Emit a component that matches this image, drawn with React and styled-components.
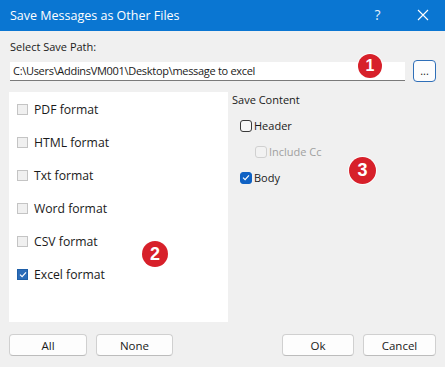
import React from "react";
import styled, { createGlobalStyle } from "styled-components";

const Global = createGlobalStyle`
  html, body { margin: 0; padding: 0; background: #f0f0f0; }
  body { font-family: "Open Sans", "Noto Sans", sans-serif; }
`;

const Window = styled.div`
  position: relative;
  width: 445px;
  height: 367px;
  background: #f0f0f0;
  display: flex;
  flex-direction: column;
  overflow: hidden;
  font-family: "Open Sans", "Noto Sans", sans-serif;
  font-size: 11px;
  color: #1a1a1a;
`;

const TitleBar = styled.div`
  height: 31px;
  background: #0a76d2;
  display: flex;
  align-items: center;
  padding-left: 10px;
  color: #fff;
  font-size: 12.5px;
`;

const Title = styled.div`
  flex: 1;
  margin-top: -1px;
`;

const TitleButton = styled.div`
  width: 45px;
  display: flex;
  justify-content: center;
  align-items: center;
  font-size: 14px;
  color: #e6f0fa;
  margin-top: -2px;
`;

const Body = styled.div`
  flex: 1;
  display: flex;
  flex-direction: column;
  padding: 7px 9px 0 9px;
`;

const Label = styled.div`
  padding-left: 1px;
  height: 18px;
  line-height: 18px;
  font-size: 11px;
`;

const PathRow = styled.div`
  display: flex;
  align-items: center;
  margin-top: 4px;
  height: 22px;
`;

const PathInput = styled.div`
  margin-left: 1px;
  width: 395px;
  height: 19px;
  background: #fff;
  border-bottom: 1px solid #7a7a7a;
  box-sizing: border-box;
  display: flex;
  align-items: center;
  padding-left: 3px;
  white-space: nowrap;
  font-size: 11px;
  letter-spacing: -0.3px;
`;

const BrowseButton = styled.div`
  margin-left: 8px;
  width: 23px;
  height: 22px;
  box-sizing: border-box;
  border: 1px solid #2f6fb8;
  border-radius: 4px;
  background: #fdfdfd;
  display: flex;
  justify-content: center;
  align-items: center;
  font-size: 11px;
  padding-bottom: 2px;
`;

const Main = styled.div`
  display: flex;
  margin-top: 10px;
  height: 230px;
`;

const FormatPanel = styled.div`
  width: 219px;
  background: #fff;
  display: flex;
  flex-direction: column;
  gap: 22px;
  padding: 12px 0 0 8px;
  box-sizing: border-box;
  font-size: 12.2px;
`;

const ContentPanel = styled.div`
  flex: 1;
  padding-left: 4px;
  display: flex;
  flex-direction: column;
  font-size: 11px;
`;

const GroupTitle = styled.div`
  height: 16px;
  line-height: 16px;
`;

const Row = styled.div`
  display: flex;
  align-items: center;
  height: 11px;
  gap: ${(p) => p.$gap || 6}px;
  margin-left: ${(p) => p.$indent || 0}px;
  margin-top: ${(p) => p.$top || 0}px;
  color: ${(p) => (p.$disabled ? "#a0a0a0" : "#1a1a1a")};
`;

const ClassicBox = styled.div`
  width: 11px;
  height: 11px;
  box-sizing: border-box;
  border: 1px solid ${(p) => (p.$checked ? "#1e5fa8" : "#c4c4c4")};
  background: ${(p) => (p.$checked ? "#2c6cb8" : "#f0f0f0")};
  display: flex;
  align-items: center;
  justify-content: center;
`;

const ModernBox = styled.div`
  width: 12px;
  height: 12px;
  box-sizing: border-box;
  border-radius: 3px;
  border: 1px solid
    ${(p) => (p.$checked ? "#0f62c4" : p.$disabled ? "#d0d0d0" : "#3a3a3a")};
  background: ${(p) => (p.$checked ? "#0f62c4" : p.$disabled ? "#f2f2f2" : "#f7f7f7")};
  display: flex;
  align-items: center;
  justify-content: center;
`;

const Footer = styled.div`
  display: flex;
  align-items: center;
  margin-top: 12px;
  gap: 9px;
`;

const Spacer = styled.div`
  flex: 1;
`;

const Button = styled.div`
  width: ${(p) => p.$w}px;
  height: 22px;
  box-sizing: border-box;
  border: 1px solid #d0d0d0;
  border-bottom-color: #bcbcbc;
  border-radius: 4px;
  background: #fdfdfd;
  display: flex;
  align-items: center;
  justify-content: center;
  font-size: 11.5px;
`;

const Badge = styled.div`
  position: absolute;
  left: ${(p) => p.$x}px;
  top: ${(p) => p.$y}px;
  width: ${(p) => p.$size}px;
  height: ${(p) => p.$size}px;
  border-radius: 50%;
  background: #d7202a;
  color: #fff;
  font-family: "Liberation Sans", Arial, sans-serif;
  font-weight: bold;
  font-size: ${(p) => Math.round(p.$size * 0.68)}px;
  display: flex;
  align-items: center;
  justify-content: center;
  box-shadow: 0 0 0 1px rgba(255, 255, 255, 0.8);
`;

const Check = ({ color = "#fff" }) => (
  <svg width="8" height="7" viewBox="0 0 8 7">
    <path d="M1 3.6 L3.1 5.6 L7 1.3" fill="none" stroke={color} strokeWidth="1.2" />
  </svg>
);

const formats = [
  { label: "PDF format" },
  { label: "HTML format" },
  { label: "Txt format" },
  { label: "Word format" },
  { label: "CSV format" },
  { label: "Excel format", checked: true },
];

export default function App() {
  return (
    <>
      <Global />
      <Window>
        <TitleBar>
          <Title>Save Messages as Other Files</Title>
          <TitleButton>?</TitleButton>
          <TitleButton>
            <svg width="12" height="12" viewBox="0 0 12 12">
              <path d="M1 1 L11 11 M11 1 L1 11" stroke="#fff" strokeWidth="1.1" />
            </svg>
          </TitleButton>
        </TitleBar>
        <Body>
          <Label>Select Save Path:</Label>
          <PathRow>
            <PathInput>C:\Users\AddinsVM001\Desktop\message to excel</PathInput>
            <BrowseButton>...</BrowseButton>
          </PathRow>
          <Main>
            <FormatPanel>
              {formats.map((f) => (
                <Row key={f.label} $gap={6}>
                  <ClassicBox $checked={f.checked}>{f.checked && <Check />}</ClassicBox>
                  <span>{f.label}</span>
                </Row>
              ))}
            </FormatPanel>
            <ContentPanel>
              <GroupTitle>Save Content</GroupTitle>
              <Row $gap={2} $indent={8} $top={12}>
                <ModernBox />
                <span>Header</span>
              </Row>
              <Row $gap={2} $indent={23} $top={15} $disabled>
                <ModernBox $disabled />
                <span>Include Cc</span>
              </Row>
              <Row $gap={2} $indent={8} $top={15}>
                <ModernBox $checked>
                  <Check />
                </ModernBox>
                <span>Body</span>
              </Row>
            </ContentPanel>
          </Main>
          <Footer>
            <Button $w={78}>All</Button>
            <Button $w={77}>None</Button>
            <Spacer />
            <Button $w={72}>Ok</Button>
            <Button $w={73}>Cancel</Button>
          </Footer>
        </Body>
        <Badge $x={358} $y={54} $size={24}>1</Badge>
        <Badge $x={142} $y={241} $size={26}>2</Badge>
        <Badge $x={349} $y={157} $size={27}>3</Badge>
      </Window>
    </>
  );
}
